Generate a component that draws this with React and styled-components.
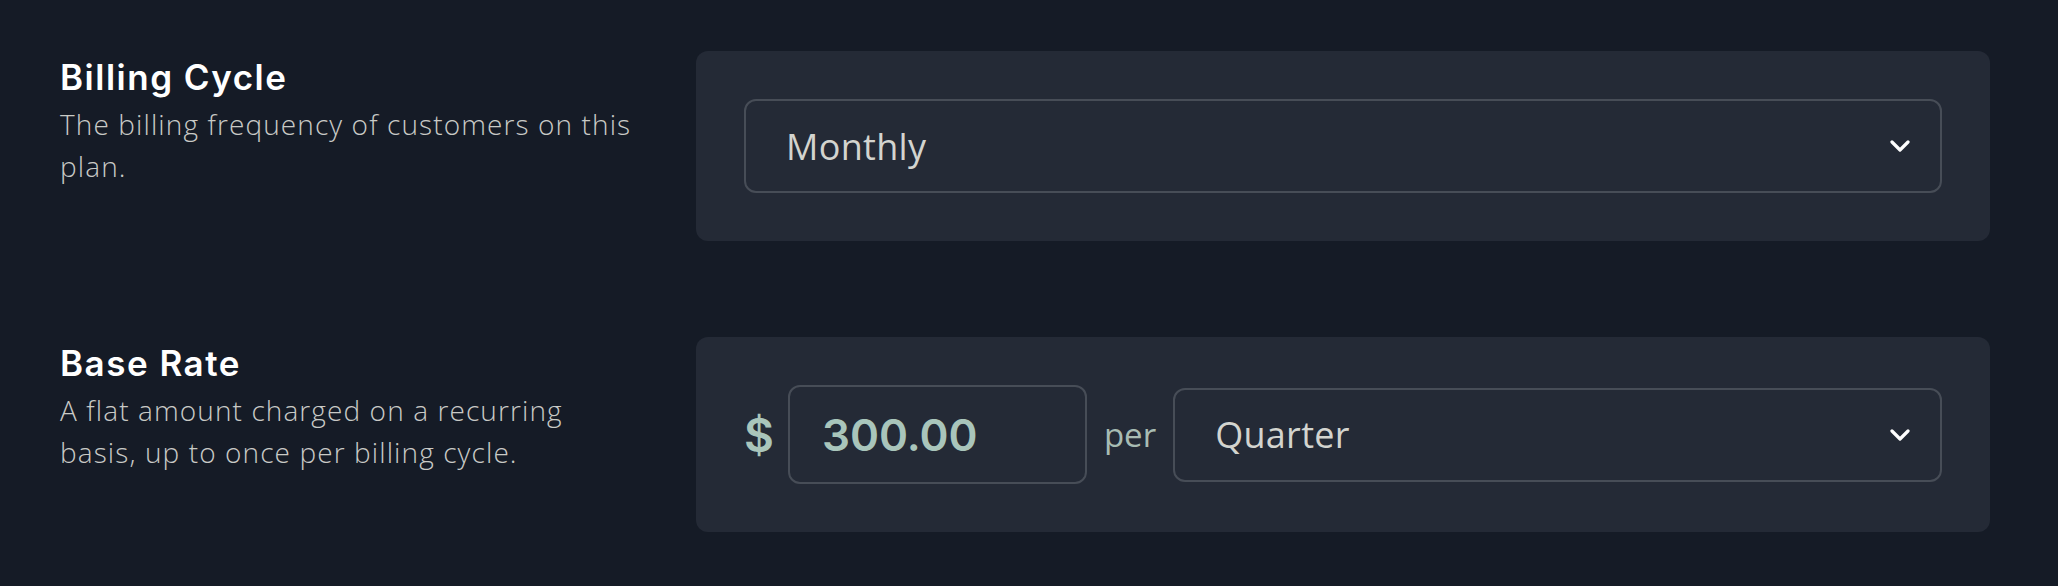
import React from "react";
import styled, { createGlobalStyle } from "styled-components";

const GlobalStyle = createGlobalStyle`
  html, body {
    margin: 0;
    padding: 0;
    background-color: #151b26;
  }
  * {
    box-sizing: border-box;
  }
`;

function Chevron() {
  return (
    <svg width="20" height="12" viewBox="0 0 20 12" fill="none">
      <path
        d="M2 2L10 10L18 2"
        stroke="#ffffff"
        strokeWidth="3.2"
        strokeLinecap="round"
        strokeLinejoin="round"
      />
    </svg>
  );
}

function Select({ value, grow }) {
  return (
    <SelectBox $grow={grow}>
      <SelectText>{value}</SelectText>
      <Chevron />
    </SelectBox>
  );
}

function App() {
  return (
    <>
      <GlobalStyle />
      <Page>
        <Row>
          <Info>
            <Title>Billing Cycle</Title>
            <Description>The billing frequency of customers on this plan.</Description>
          </Info>
          <Panel>
            <Select value="Monthly" grow />
          </Panel>
        </Row>
        <Row>
          <Info>
            <Title>Base Rate</Title>
            <Description>
              A flat amount charged on a recurring basis, up to once per billing cycle.
            </Description>
          </Info>
          <Panel>
            <Currency>$</Currency>
            <AmountInput defaultValue="300.00" />
            <Per>per</Per>
            <Select value="Quarter" grow />
          </Panel>
        </Row>
      </Page>
    </>
  );
}

const Page = styled.div`
  display: flex;
  flex-direction: column;
  gap: 96px;
  width: 2058px;
  height: 586px;
  padding: 51px 68px 0 60px;
  background-color: #151b26;
`;

const Row = styled.div`
  display: grid;
  grid-template-columns: 580px 1fr;
  column-gap: 56px;
  align-items: start;
`;

const Info = styled.div`
  display: flex;
  flex-direction: column;
  padding-top: 4px;
`;

const Title = styled.div`
  font-family: "Inter", "Noto Sans", sans-serif;
  font-weight: 600;
  font-size: 35px;
  line-height: 44px;
  letter-spacing: 1.5px;
  color: #ffffff;
`;

const Description = styled.div`
  font-family: "Open Sans", "Noto Sans", sans-serif;
  font-weight: 300;
  font-size: 28px;
  line-height: 42px;
  letter-spacing: 1.1px;
  color: #c9cac6;
  margin-top: 4px;
`;

const Panel = styled.div`
  display: flex;
  align-items: center;
  gap: 17px;
  padding: 48px;
  background-color: #242a36;
  border-radius: 12px;
`;

const SelectBox = styled.div`
  flex: ${(p) => (p.$grow ? 1 : "none")};
  display: flex;
  align-items: center;
  justify-content: space-between;
  height: 94px;
  padding: 0 30px 0 40px;
  border: 2px solid #474d57;
  border-radius: 12px;
  background-color: #242a36;
`;

const SelectText = styled.span`
  font-family: "Open Sans", "Noto Sans", sans-serif;
  font-weight: 400;
  font-size: 36px;
  letter-spacing: 0.3px;
  color: #d3d4cf;
`;

const Currency = styled.span`
  font-family: "Inter", "Noto Sans", sans-serif;
  font-weight: 600;
  font-size: 46px;
  color: #a9c5bb;
  margin-right: -3px;
`;

const AmountInput = styled.input`
  width: 299px;
  height: 99px;
  padding: 0 32px;
  border: 2px solid #474d57;
  border-radius: 12px;
  background-color: #242a36;
  font-family: "Inter", "Noto Sans", sans-serif;
  font-weight: 600;
  font-size: 44px;
  color: #a9c5bb;
  outline: none;
`;

const Per = styled.span`
  font-family: "Open Sans", "Noto Sans", sans-serif;
  font-weight: 400;
  font-size: 33px;
  color: #a8bcb3;
`;

export default App;
